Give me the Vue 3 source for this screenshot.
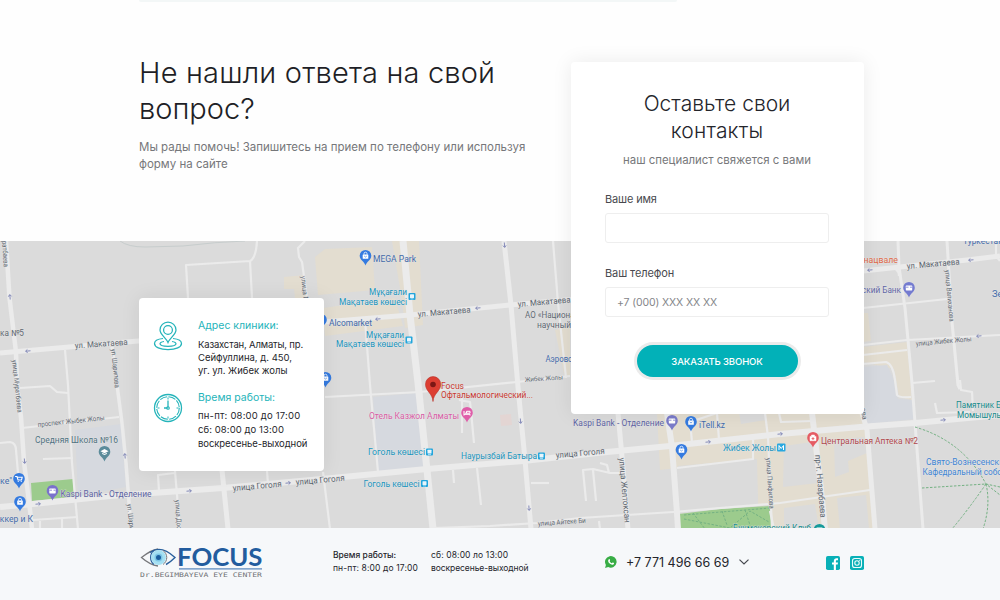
<script setup>
const majorRoads = [
  { d: 'M0 353L138 341L323 322L410 315L510 305L600 297L863 271L900 267L967 260L1000 256', w: 5 },
  { d: 'M0 507L33 504L110 496L223 488L343 477L427 469L523 461L607 452L670 446L780 434L860 427L915 423L1000 415', w: 6 },
  { d: 'M403 241L410 315L418 383L427 470L433 529', w: 7 },
  { d: 'M504 241L511 305L518 387L525 460L531 529', w: 5 },
  { d: 'M6 241L9.5 298L16 352L17 386L21 417L24 462L30 510L32 529', w: 4.5 },
  { d: 'M618 413L622 457L628 529', w: 5 },
  { d: 'M667 413L672 447L677 513L678 529', w: 6 },
  { d: 'M812 413L820 480L825 529', w: 6 },
  { d: 'M862 413L867 430L875 529', w: 5 },
  { d: 'M112 347L117 385L122 423L126 463L131 529', w: 3.5 },
  { d: 'M222 470L228 529', w: 5 },
  { d: 'M898 241L899 267L905 308L912 383L915 423L923 529', w: 3 },
  { d: 'M947 241L952 322L958 385L960 389', w: 3 }
]

const minorRoads = [
  'M65 350L68 385L72 463L78 529',
  'M188 298L186 265L250 261Q256 258 257 241M250 261L252 298',
  'M305 241L298 248L299 257L302 262L307 298',
  'M22 428L119 417', 'M20 388L50 386L57 392L68 393',
  'M0 443L10 442Q16 443 16 450L18 473', 'M43 459L73 458',
  'M32 520L78 517M40 529V521M62 529V519', 'M175 471L177 495L180 529M175 473L158 475L159 491',
  'M267 471L268 484M323 472L330 529', 'M553 241L558 303L566 378',
  'M325 397L420 392L517 382L570 376', 'M365 320L370 385L378 472',
  'M459 400L470 402L471 411L474 443M462 398V433', 'M453 470L454 483M477 468L481 505',
  'M531 483H549', 'M433 528L490 526L537 523L580 518L673 512L780 503L870 490',
  'M586 501L583 470L593 469L610 473L620 473M593 470L596 501M600 463L607 465L609 473',
  'M690 421L692 442M690 422L717 413L719 440', 'M677 468L753 459V440',
  'M765 413L768 437L772 529', 'M779 413L781 422L812 421',
  'M863 308L947 299', 'M863 345L907 340L1000 335', 'M863 355L907 350',
  'M863 364L886 362Q893 364 895 380L897 395Q899 398 911 397',
  'M912 383L935 381', 'M960 380L961 390L972 392L973 411M935 403L937 413L970 412',
  'M996 241V257Q999 259 1000 261M599 521L600 529M770 511L774 529',
  'M888 268Q899 267 899 276'
]

const areas = [
  { p: '315,257 325,249 372,247 375,290 318,295', c: '#e3ddd0' },
  { p: '392,241 419,241 423,325 405,328 402,300', c: '#e3ddd0' },
  { p: '323,308 395,298 403,326 325,336', c: '#e3ddd0' },
  { p: '284,277 305,275 307,298 295,298 294,289 284,289', c: '#e3ddd0' },
  { p: '555,330 570,326 570,377 564,374', c: '#e3ddd0' },
  { p: '657,413 862,413 874,490 822,497 758,506 756,459 660,470', c: '#e3ddd0' },
  { p: '770,497 873,488 876,529 773,529', c: '#e3ddd0' },
  { p: '678,466 757,459 758,504 679,511', c: '#dbdbdb' },
  { p: '784,446 812,442 818,483 783,487', c: '#dbdbdb' },
  { p: '834,440 864,437 867,453 848,461 849,472 835,477', c: '#dbdbdb' },
  { p: '784,508 815,504 819,529 784,529', c: '#dbdbdb' },
  { p: '837,498 866,495 869,529 840,529', c: '#dbdbdb' },
  { p: '739,413 765,413 766,420 741,424', c: '#dbdbdb' },
  { p: '863,313 868,313 871,341 863,342', c: '#e3ddd0' },
  { p: '863,347 907,342 912,400 899,397 894,369 863,362', c: '#e3ddd0' },
  { p: '863,367 887,365 893,378 898,399 913,400 915,419 866,424', c: '#d6d9df' },
  { p: '75,430 121,424 126,487 78,496', c: '#d6d9df' },
  { p: '373,397 418,393 425,467 378,471', c: '#d6d9df' },
  { p: '500,415 511,414 512,425 501,426', c: '#e3d5d3' },
  { p: '31,483 73,479 74,497 32,501', c: '#9ccb8d' },
  { p: '679,514 720,509 770,506 773,529 680,529', c: '#9ccb8d' }
]

const slate = '#5d6670'
const teal = '#1994bd'
const blue = '#4169a8'
const labels = [
  { t: 'MEGA Park', x: 373, y: 261.5, l: 43, c: blue, s: 8.5 },
  { t: 'Мұқағали', x: 369, y: 295, l: 38, c: teal },
  { t: 'Мақатаев көшесі', x: 339, y: 304.5, l: 68, c: teal },
  { t: 'Alcomarket', x: 329, y: 326, l: 43, c: blue },
  { t: 'Мұқағали', x: 366, y: 338, l: 38, c: teal },
  { t: 'Мақатаев көшесі', x: 336, y: 347, l: 68, c: teal },
  { t: 'ул. Макатаева', x: 418, y: 317, l: 53, c: slate, r: -5 },
  { t: 'ул. Макатаева', x: 518, y: 307, l: 53, c: slate, r: -5 },
  { t: 'ул. Макатаева', x: 75, y: 348.5, l: 53, c: slate, r: -4 },
  { t: 'ул. Макатаева', x: 907, y: 269, l: 53, c: slate, r: -5 },
  { t: 'АО «Национальный', x: 525, y: 318, l: 74, c: slate },
  { t: 'научный', x: 537, y: 327.5, l: 34, c: slate },
  { t: 'Аэровокзал', x: 545.5, y: 361.5, l: 44, c: blue },
  { t: 'Жибек Жолы', x: 525, y: 382, l: 38, c: slate, r: -4, s: 6.5 },
  { t: 'Focus', x: 441, y: 388.5, l: 23, c: '#c7362f' },
  { t: 'Офтальмологический...', x: 441, y: 398, l: 92, c: '#c7362f' },
  { t: 'Отель Казжол Алматы', x: 369, y: 418.5, l: 90, c: '#d85ca5' },
  { t: 'Гоголь көшесі', x: 368, y: 455, l: 57, c: teal },
  { t: 'Гоголь көшесі', x: 363.5, y: 486.5, l: 56, c: teal },
  { t: 'Наурызбай Батыра', x: 461, y: 459, l: 76, c: teal },
  { t: 'улица Гоголя', x: 233, y: 491, l: 49, c: slate, r: -5 },
  { t: 'улица Гоголя', x: 296, y: 485, l: 49, c: slate, r: -5 },
  { t: 'улица Гоголя', x: 556, y: 458, l: 49, c: slate, r: -5 },
  { t: 'улица Айтеке Би', x: 538, y: 526, l: 48, c: slate, r: -4, s: 7 },
  { t: 'Kaspi Bank - Отделение', x: 573, y: 426, l: 91, c: '#5d63a3' },
  { t: 'iTell.kz', x: 699, y: 427.5, l: 26, c: blue },
  { t: 'Жибек Жолы', x: 723, y: 450.5, l: 53, c: teal },
  { t: 'Центральная Аптека №2', x: 821, y: 443.5, l: 97, c: '#b0484c' },
  { t: 'Памятник Бауыржану', x: 956, y: 408, l: 83, c: '#168a8b' },
  { t: 'Момышулы', x: 957, y: 417.5, l: 46, c: '#168a8b' },
  { t: 'Свято-Вознесенский', x: 926, y: 465, l: 83, c: '#3d83d3' },
  { t: 'Кафедральный собор', x: 922.5, y: 474.5, l: 84, c: '#3d83d3' },
  { t: 'Букмекерский Клуб', x: 733, y: 530.5, l: 78, c: '#168a8b' },
  { t: 'Kaspi Bank - Отделение', x: 60.5, y: 496.5, l: 91, c: '#5d63a3' },
  { t: 'Средняя Школа №16', x: 35, y: 442.5, l: 83, c: '#4f7180' },
  { t: 'проспект Жыбек Жолы', x: 38, y: 427, l: 67, c: slate, r: -6, s: 7 },
  { t: 'ка №5', x: 0, y: 336, l: 24, c: slate },
  { t: 'ке"', x: 0, y: 484, l: 12, c: blue },
  { t: 'оккер и К', x: -5, y: 522, l: 38, c: blue },
  { t: 'Хунацвале', x: 854, y: 263, l: 44, c: '#df6846' },
  { t: 'ский Банк', x: 862, y: 293, l: 39, c: '#5d63a3' },
  { t: 'Туркестан', x: 963, y: 244, l: 40, c: blue },
  { t: 'Зенк', x: 992, y: 297, l: 21, c: blue },
  { t: 'улица Жибек Жолы', x: 916, y: 346, l: 56, c: slate, r: -5, s: 7 },
  { t: 'улица Валиханова', x: 945, y: 270, l: 52, c: slate, r: 85, s: 7 },
  { t: 'ул. Шарипова', x: 111, y: 349, l: 39, c: slate, r: 84, s: 7 },
  { t: 'ул. Шарипова', x: 127, y: 504, l: 40, c: slate, r: 84, s: 7 },
  { t: 'ова', x: 114, y: 378, l: 10, c: slate, r: 86, s: 7 },
  { t: 'улица Досмухамедова', x: 175, y: 500, l: 65, c: slate, r: 86, s: 7 },
  { t: 'улица Муратбаева', x: 12, y: 360, l: 53, c: slate, r: 84, s: 7 },
  { t: 'ратбаева', x: 2, y: 241, l: 26, c: slate, r: 86, s: 7 },
  { t: 'улица М', x: 301, y: 276, l: 27, c: slate, r: 84, s: 7 },
  { t: 'улица Желтоксан', x: 619, y: 458, l: 65, c: slate, r: 85 },
  { t: 'улица Панфилова', x: 766, y: 458, l: 51, c: slate, r: 86, s: 7 },
  { t: 'пр-т. Назарбаева', x: 815, y: 455, l: 63, c: slate, r: 85 },
  { t: 'ова', x: 861, y: 408, l: 12, c: slate, r: 83, s: 7 }
]

const pins = [
  { x: 365.5, y: 256, c: '#357be0', k: 'bag' }, { x: 321, y: 320, c: '#357be0', k: 'bag' },
  { x: 325.5, y: 378, c: '#357be0', k: 'bag' }, { x: 672, y: 421, c: '#7a7bc9', k: 'card' },
  { x: 691, y: 422, c: '#357be0', k: 'bag' }, { x: 681.5, y: 450, c: '#357be0', k: 'bag' },
  { x: 813, y: 438, c: '#e55b63', k: 'plus' }, { x: 909, y: 288, c: '#747bd0', k: 'card' },
  { x: 52.5, y: 491, c: '#7a71cc', k: 'card' }, { x: 104.5, y: 452, c: '#5b8b9a', k: 'hat' },
  { x: 19, y: 479, c: '#357be0', k: 'cart' }, { x: 20, y: 502, c: '#357be0', k: 'bag' },
  { x: 467, y: 413, c: '#df5da9', k: 'bed' }, { x: 819.5, y: 530, c: '#169a9b', k: 'card' }
]

const metro = [
  { x: 412, y: 296.5 }, { x: 409, y: 340 }, { x: 429.5, y: 452 }, { x: 424.5, y: 483.5 },
  { x: 541.5, y: 456 }
]

const arrows = [
  { x: 28, y: 351, r: 175 }, { x: 378, y: 319, r: 175 }, { x: 478, y: 308, r: 175 },
  { x: 870, y: 270, r: 175 }, { x: 971, y: 260, r: 175 }, { x: 979, y: 336, r: 175 },
  { x: 38, y: 504, r: -5 }, { x: 189, y: 491, r: -5 }, { x: 288, y: 483, r: -5 },
  { x: 708, y: 442, r: -5 }, { x: 780, y: 434, r: -5 }, { x: 943, y: 420, r: -5 },
  { x: 10, y: 297, r: -95 }, { x: 24.5, y: 461, r: 86 }, { x: 125, y: 456, r: -95 },
  { x: 504.5, y: 245, r: 86 }, { x: 520.5, y: 421, r: 86 }, { x: 529, y: 508, r: 86 }
]
</script>

<template>
  <div class="page">
    <section class="question">
      <div class="strip"></div>
      <h1><span class="wide-title">Не нашли ответа на свой</span><br />вопрос?</h1>
      <p class="lead"><span>Мы рады помочь! Запишитесь на прием по телефону или используя</span><br />форму на сайте</p>
    </section>

    <section class="map">
      <svg class="map-canvas" viewBox="0 241 1000 287" width="1000" height="287">
        <rect x="0" y="241" width="1000" height="287" fill="#dbdbdb" />
        <polygon v-for="(a, i) in areas" :key="'a' + i" :points="a.p" :fill="a.c" />
        <path d="M120 241Q128 247 145 247L183 246Q215 242 245 241" fill="none" stroke="#c7cdcd" stroke-width="1" />
        <g fill="none" stroke="#ebebeb" stroke-linejoin="round">
          <path v-for="(d, i) in minorRoads" :key="'n' + i" :d="d" stroke-width="2.2" />
          <path v-for="(r, i) in majorRoads" :key="'m' + i" :d="r.d" :stroke-width="r.w" />
        </g>
        <g fill="none" stroke="#74b183" stroke-width="1" stroke-dasharray="2.5 1.5">
          <path d="M915 427Q963 441 986 484L1000 495M922 488L986 484L1000 487M986 484Q991 505 983 529M986 484Q968 510 952 529" />
          <path d="M684 515L770 508M693 513L705 529M722 511L727 525M745 510L750 525M684 519L730 528L750 511L769 522" />
        </g>
        <g v-for="(a, i) in arrows" :key="'r' + i" :transform="`translate(${a.x} ${a.y}) rotate(${a.r})`">
          <path d="M-2.5 0H2M0.5 -1.6L2.5 0L0.5 1.6" fill="none" stroke="#7d84b5" stroke-width=".9" />
        </g>
        <text
          v-for="(l, i) in labels" :key="'l' + i" class="label" :x="l.x" :y="l.y" :fill="l.c"
          :font-size="l.s || 8.5" :textLength="l.l" lengthAdjust="spacingAndGlyphs"
          :transform="l.r ? `rotate(${l.r} ${l.x} ${l.y})` : undefined"
        >{{ l.t }}</text>
        <g v-for="(m, i) in metro" :key="'s' + i" :transform="`translate(${m.x} ${m.y})`">
          <rect x="-3.5" y="-3.5" width="7" height="7" rx="1" fill="#22a5dc" />
          <rect x="-2" y="-2.2" width="4" height="3.6" rx=".5" fill="#e8f5fb" />
          <path d="M-1.5 2.4H1.5" stroke="#e8f5fb" stroke-width=".7" />
        </g>
        <rect x="777" y="443.5" width="8.5" height="8" rx="1" fill="#28a8e0" />
        <path d="M779 450V445.5L781.2 448.5L783.5 445.5V450" fill="none" stroke="#fff" stroke-width="1" />
        <g v-for="(p, i) in pins" :key="'p' + i" :transform="`translate(${p.x} ${p.y})`">
          <path d="M0 9.5C-1 5.5 -5.8 4 -5.8 -.3A5.8 5.8 0 0 1 5.8 -.3C5.8 4 1 5.5 0 9.5Z" :fill="p.c" />
          <template v-if="p.k === 'bag'">
            <rect x="-2.8" y="-1.5" width="5.6" height="4.2" rx=".5" fill="#fff" />
            <path d="M-1.5 -1.3V-2.3A1.5 1.5 0 0 1 1.5 -2.3V-1.3" stroke="#fff" stroke-width=".8" fill="none" />
            <path d="M-1.3 0Q0 2 1.3 0" :stroke="p.c" stroke-width=".7" fill="none" />
          </template>
          <template v-else-if="p.k === 'card'">
            <rect x="-3.2" y="-2.4" width="6.4" height="4.8" rx=".6" fill="#fff" />
            <path d="M-3 -.8H-.5M1 -.8H3" :stroke="p.c" stroke-width=".8" />
          </template>
          <template v-else-if="p.k === 'plus'">
            <path d="M-3 -1.6H3V2.7H-3ZM-1.5 -1.6V-3H1.5V-1.6" fill="#fff" stroke="#fff" stroke-width=".5" />
            <path d="M-1.4 .6H1.4M0 -.8V2" :stroke="p.c" stroke-width=".9" />
          </template>
          <path v-else-if="p.k === 'hat'" d="M-4 -.8L0 -3L4 -.8L0 1.3ZM-2.3 .8V2L0 3L2.3 2V.8L0 2Z" fill="#fff" />
          <path v-else-if="p.k === 'cart'" d="M-3.5 -2.5H-2L-1 1H2.5L3.2 -1.7H-1.7M-.8 2.5h.1M2.2 2.5h.1" fill="none" stroke="#fff" stroke-width="1.1" stroke-linecap="round" />
          <path v-else d="M-3 -2V2.5M-3 1.3H3V2.5M-2 .2H3V-1.7H-.5V.2" fill="none" stroke="#fff" stroke-width="1" />
        </g>
        <path d="M433 401.5C432.5 393 425.5 391.5 425.5 384.2A7.6 7.6 0 0 1 440.7 384.2C440.7 391.5 433.5 393 433 401.5Z" fill="#dc3e32" stroke="#b93129" stroke-width=".6" />
        <circle cx="433" cy="384.5" r="2.8" fill="#7c1715" />
      </svg>

      <div class="address-card">
        <svg class="info-icon" viewBox="0 0 30 30" width="30" height="30" fill="none" stroke="#25b4ba" stroke-width="1.25">
          <path d="M15 21.5C13.5 17.5 7 13.5 7 9A8 8 0 0 1 23 9C23 13.5 16.5 17.5 15 21.5Z" />
          <circle cx="15" cy="9" r="4.4" />
          <path d="M10 17.5C4.5 18 1.5 20 1.5 22.500C1.5 26 7 28.5 15 28.5S28.5 26 28.5 22.5C28.5 20 25.5 18 20 17.5" />
          <path d="M11 20.5C8.500 20.9 7 21.7 7 22.8C7 24.3 10 25.3 15 25.3S23 24.3 23 22.8C23 21.7 21.5 20.9 19 20.5" />
        </svg>
        <div class="info">
          <h3>Адрес клиники:</h3>
          <p><span class="city">Казахстан, Алматы, пр.</span><br />Сейфуллина, д. 450,<br />уг. ул. Жибек жолы</p>
        </div>
        <svg class="info-icon" viewBox="0 0 30 30" width="30" height="30" fill="none" stroke="#25b4ba">
          <circle cx="15" cy="15" r="13.5" stroke-width="1.3" />
          <circle cx="15" cy="15" r="11.3" stroke-width="1.1" stroke-dasharray="7.5 1.4" />
          <path d="M15 7.5V14.5M11 15H14.5" stroke-width="1.3" />
          <circle cx="15" cy="15" r="1.3" stroke-width="1.1" />
          <path d="M15 4.5V6.5M15 23.5V25.5M4.5 15H6.500M23.5 15H25.5" stroke-width="1" />
        </svg>
        <div class="info">
          <h3>Время работы:</h3>
          <p class="hours"><span class="weekdays">пн-пт: 08:00 до 17:00</span><br /><span class="saturday">сб: 08:00 до 13:00</span><br /><span class="sunday">воскресенье-выходной</span></p>
        </div>
      </div>
    </section>

    <form class="contact" @submit.prevent>
      <h2>Оставьте свои<br /><span class="wide-title">контакты</span></h2>
      <p class="sub">наш специалист свяжется с вами</p>
      <label>Ваше имя</label>
      <input type="text" />
      <label class="second">Ваш телефон</label>
      <input type="text" placeholder="+7 (000) XXX XX XX" />
      <button type="submit">ЗАКАЗАТЬ ЗВОНОК</button>
    </form>

    <footer>
      <svg class="logo" viewBox="139 545 124 35" width="124" height="35">
        <path d="M158 549C151 550 146 554 141.5 557.5C146 561.5 151 565 158 566" fill="none" stroke="#77787b" stroke-width="1.3" />
        <path d="M150 552.5C158 546.5 167 550 175 557.5C171 561.5 168 563.5 166 564.5" fill="none" stroke="#285f9c" stroke-width="1.4" />
        <path d="M154 550.5C149.5 554 149.5 561 154 564.5" fill="none" stroke="#285f9c" stroke-width="1.2" />
        <circle cx="158.5" cy="557.5" r="7.4" fill="#a5e0f2" />
        <path d="M163 550.5C168 554 168 561 163 564.5" fill="none" stroke="#77787b" stroke-width="1" />
        <circle cx="158.5" cy="557.5" r="4" fill="#7cc6e6" /><circle cx="158.5" cy="557.5" r="2.5" fill="#1c5f9f" />
        <text class="brand" x="177" y="566" textLength="85.5" lengthAdjust="spacingAndGlyphs">FOCUS</text>
        <rect x="179" y="568" width="83" height="1.7" fill="#83a6cd" />
        <text class="tagline" x="140" y="576.8" textLength="122" lengthAdjust="spacingAndGlyphs">Dr.BEGIMBAYEVA EYE CENTER</text>
      </svg>
      <div class="schedule">
        <b>Время работы:</b><span class="looser">пн-пт: 8:00 до 17:00</span>
      </div>
      <div class="schedule weekend">
        <span class="looser">сб: 08:00 ло 13:00</span><span class="tighter">воскресенье-выходной</span>
      </div>
      <div class="phone">
        <svg viewBox="0 0 12 12" width="12" height="12">
          <path d="M.1 11.9L.9 8.9A5.8 5.8 0 1 1 3.2 11Z" fill="#38ad45" />
          <path d="M3.9 3.2C4.5 2.8 4.7 3.2 5.1 4.3C5.2 4.7 4.7 5 4.7 5.2C5.2 6.3 5.9 6.9 6.9 7.3C7.3 7.3 7.5 6.5 7.9 6.6C9.2 7.2 9.2 7.3 9 7.8C8.4 9.1 6.9 9 5.4 8C3.6 6.9 2.3 4.5 3.9 3.2Z" fill="#fff" />
        </svg>
        <span>+7 771 496 66 69</span>
        <svg class="chevron" viewBox="0 0 10 6" width="10" height="6"><path d="M.5 .6L5 5L9.5 .6" fill="none" stroke="#45484e" stroke-width="1.2" /></svg>
      </div>
      <div class="social">
        <svg viewBox="0 0 14 14" width="14" height="14">
          <rect width="14" height="14" rx="1.8" fill="#08b0b7" />
          <path d="M7.8 14V8.6H6V6.6H7.8V5.2C7.8 3.3 8.9 2.3 10.6 2.3H12V4.2H11C10 4.2 9.9 4.7 9.9 5.4V6.6H12L11.7 8.6H9.9V14Z" fill="#fff" />
        </svg>
        <svg viewBox="0 0 14 14" width="14" height="14">
          <rect width="14" height="14" rx="1.8" fill="#08b0b7" />
          <rect x="2.5" y="2.5" width="9" height="9" rx="2.3" fill="none" stroke="#e9fbfb" stroke-width="1.1" />
          <circle cx="7" cy="7" r="2.2" fill="none" stroke="#e9fbfb" stroke-width="1.1" />
          <circle cx="9.7" cy="4.3" r=".6" fill="#e9fbfb" />
        </svg>
      </div>
    </footer>
  </div>
</template>

<style>
html, body { margin: 0; overflow: hidden; }
</style>

<style scoped>
.page { position: relative; width: 1000px; height: 600px; overflow: hidden; background: #fefefe; display: flex; flex-direction: column; font-family: Inter, "Open Sans", "Liberation Sans", sans-serif; color: #24252b; }
.page span { white-space: nowrap; }
h1, h2, h3, p { margin: 0; font-weight: 400; }
.question { height: 241px; flex: none; padding-left: 139px; box-sizing: border-box; }
.strip { width: 538px; height: 2px; background: #f3f7f7; border-radius: 0 0 4px 4px; }
h1 { padding-top: 53px; font-size: 29px; line-height: 35.5px; font-weight: 300; color: #1e1f26; }
.wide-title { letter-spacing: .17px; }
.lead { margin-top: 13px; font-size: 11.5px; line-height: 16.5px; color: #76777a; }
.map { position: relative; height: 287px; flex: none; }
.map-canvas { display: block; }
.label { font-family: Roboto, "Noto Sans", sans-serif; stroke: #e6e6e6; stroke-width: .7px; paint-order: stroke; }
.address-card { position: absolute; left: 139px; top: 57px; width: 185px; height: 173px; box-sizing: border-box; padding: 20px 0 0 14px; border-radius: 4px; background: #fff; box-shadow: 0 0 20px rgba(0,0,0,.08); display: grid; grid-template-columns: 30px 1fr; grid-template-rows: 71.5px 80px; column-gap: 15px; }
.info-icon { margin-top: 3px; }
.info h3 { font-size: 10.5px; line-height: 16px; color: #25b4ba; }
.info p { margin-top: 4px; font-size: 9.5px; line-height: 13px; color: #25262b; }
.info .hours { margin-top: 3px; line-height: 14.3px; }
.city { letter-spacing: -.17px; }
.weekdays { letter-spacing: .2px; }
.saturday { letter-spacing: .08px; }
.sunday { letter-spacing: -.07px; }
.contact { position: absolute; left: 571px; top: 62px; width: 293px; height: 352px; box-sizing: border-box; padding: 29px 35px 0 34px; border-radius: 4px; background: #fff; box-shadow: 0 0 20px rgba(0,0,0,.08); display: flex; flex-direction: column; }
h2 { text-align: center; font-size: 21px; line-height: 26.5px; font-weight: 300; }
.sub { margin-top: 8px; text-align: center; font-size: 11.4px; line-height: 16px; color: #77787b; }
label { margin-top: 23px; font-size: 11px; line-height: 16px; letter-spacing: -.15px; color: #48494e; }
label.second { margin-top: 22px; letter-spacing: -.1px; }
input { margin-top: 6px; height: 30px; box-sizing: border-box; border: 1.5px solid #eee; border-radius: 3px; padding: 0 11px; font: 10.5px Inter, sans-serif; letter-spacing: -.12px; background: #fff; outline: none; }
input::placeholder { color: #85868a; opacity: 1; }
button { align-self: center; margin-top: 28px; width: 161px; height: 32px; flex: none; padding: 0; border: 0; border-radius: 16px; background: #02b1b8; box-shadow: 0 0 0 3px #ebebeb; color: #fff; font: 500 9.5px Inter, sans-serif; letter-spacing: -.12px; }
footer { height: 72px; flex: none; background: #f6f8fa; display: flex; align-items: flex-start; box-sizing: border-box; padding: 17px 136px 0 139px; }
.brand { font: 700 24px Lato, "Open Sans", sans-serif; fill: #225c9e; }
.tagline { font: 6.3px "DejaVu Sans Mono", monospace; fill: #6f7175; }
.schedule { margin: 4px 0 0 70px; width: 98px; display: flex; flex-direction: column; font-size: 8.5px; line-height: 13px; white-space: nowrap; }
.schedule > * { align-self: flex-start; }
.schedule b { font-weight: 500; }
.looser { letter-spacing: .12px; }
.tighter { letter-spacing: -.08px; }
.weekend { margin-left: 0; }
.phone { display: flex; align-items: center; height: 20px; margin: 7px 0 0 76px; font-size: 12.5px; }
.phone span { margin-left: 9px; }
.chevron { margin-left: 10px; }
.social { display: flex; gap: 10px; margin: 10.5px 0 0 auto; }
</style>
